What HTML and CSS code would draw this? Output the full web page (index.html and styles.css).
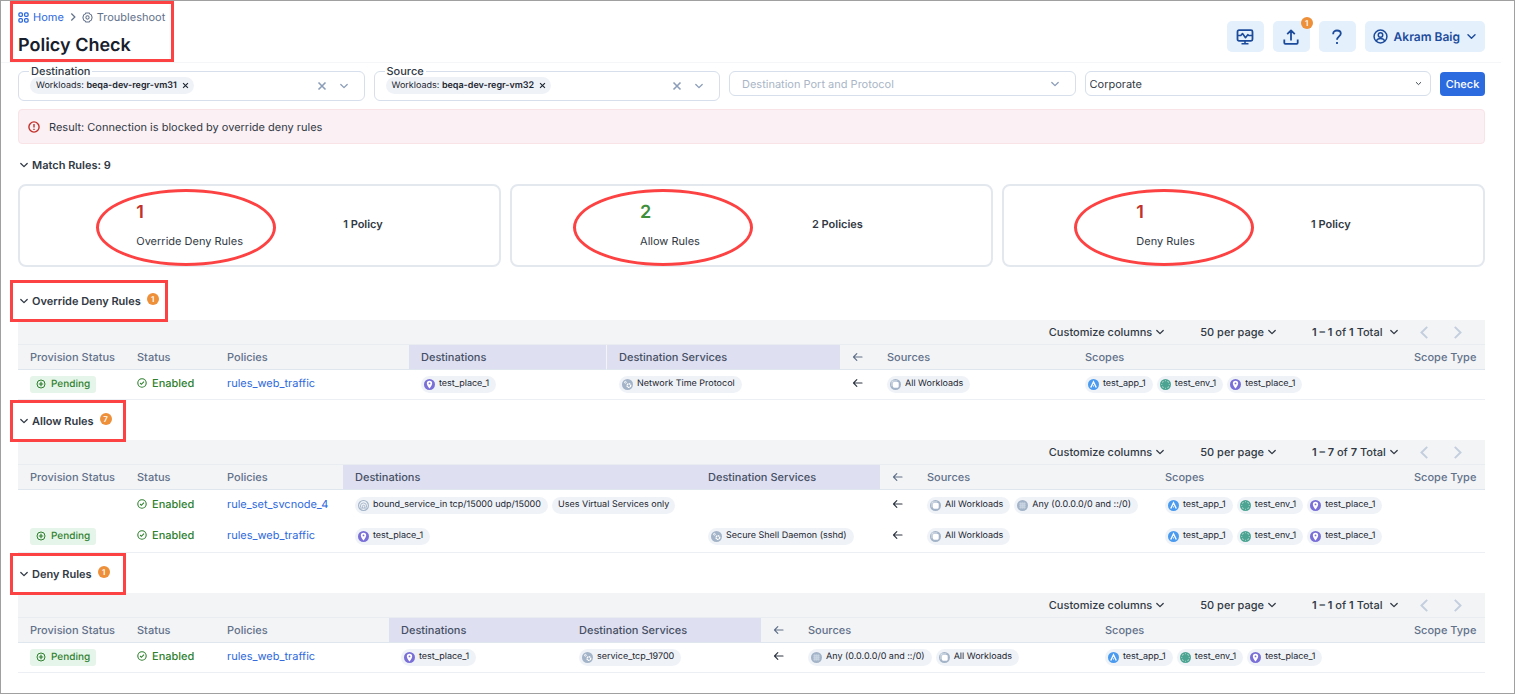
FILE: index.html
```html
<!DOCTYPE html>
<html lang="en">
  <head>
    <meta charset="utf-8" />
    <meta name="viewport" content="width=device-width, initial-scale=1" />
    <title>Policy Check</title>
    <link rel="stylesheet" href="styles.css" />
  </head>

  <body>
    <!-- icon set -->
    <svg class="sprite" aria-hidden="true">
      <symbol id="i-grid" viewBox="0 0 12 12" fill="none" stroke="currentColor" stroke-width="1.4">
        <rect x="1" y="1" width="3.8" height="3.8" rx="1.2" />
        <rect x="7.2" y="1" width="3.8" height="3.8" rx="1.2" />
        <rect x="1" y="7.2" width="3.8" height="3.8" rx="1.2" />
        <rect x="7.2" y="7.2" width="3.8" height="3.8" rx="1.2" />
      </symbol>
      <symbol id="i-gear" viewBox="0 0 12 12" fill="none" stroke="currentColor" stroke-width="1.1">
        <path d="M4.3 1h3.4l1 1.3 1.5.9.8 2.8-.8 2.8-1.5.9-1 1.3H4.3l-1-1.3-1.5-.9L1 6l.8-2.8 1.5-.9z" stroke-linejoin="round" />
        <circle cx="6" cy="6" r="1.8" />
      </symbol>
      <symbol id="i-down" viewBox="0 0 10 10" fill="none" stroke="currentColor" stroke-width="1.3" stroke-linecap="round" stroke-linejoin="round">
        <path d="M1.8 3.5 5 6.6l3.2-3.1" />
      </symbol>
      <symbol id="i-right" viewBox="0 0 12 12" fill="none" stroke="currentColor" stroke-width="1.8">
        <path d="M3.5.8 8.8 6l-5.300 5.200" />
      </symbol>
      <symbol id="i-left" viewBox="0 0 12 12" fill="none" stroke="currentColor" stroke-width="1.8">
        <path d="M8.5.8 3.2 6l5.300 5.200" />
      </symbol>
      <symbol id="i-x" viewBox="0 0 10 10" fill="none" stroke="currentColor" stroke-width="1.6">
        <path d="m1.5 1.5 7 7m0-7-7 7" />
      </symbol>
      <symbol id="i-arrow" viewBox="0 0 12 12" fill="none" stroke="currentColor" stroke-width="1.2" stroke-linecap="round" stroke-linejoin="round">
        <path d="M10 6H1.500m3.300-3.300L1.500 6l3.300 3.300" />
      </symbol>
      <symbol id="i-monitor" viewBox="0 0 18 16" fill="none" stroke="currentColor" stroke-width="1.8" stroke-linejoin="round">
        <rect x="1.5" y="1.2" width="15" height="10.6" rx="1.5" />
        <path d="M1.500 6.500h3.300l1.700-2 3 4.200 2.300-3 1 .8h3.700M9 12v2.500M5.500 14.800h7" stroke-width="1.6" />
      </symbol>
      <symbol id="i-upload" viewBox="0 0 16 16" fill="none" stroke="currentColor" stroke-width="1.8" stroke-linejoin="round">
        <path d="M1.300 10.500v3.300a1 1 0 0 0 1 1h11.400a1 1 0 0 0 1-1v-3.300M8 11.500V1.600M4.200 5.200 8 1.400l3.800 3.800" />
      </symbol>
      <symbol id="i-help" viewBox="0 0 12 16" fill="none" stroke="currentColor" stroke-width="1.8">
        <path d="M2.200 5.200V4.700C2.200 2.700 3.800 1.500 6 1.500s3.800 1.300 3.800 3.100c0 2.600-3.800 3-3.800 6.200M6 13v2" />
      </symbol>
      <symbol id="i-user" viewBox="0 0 14 14" fill="none" stroke="currentColor" stroke-width="1.4">
        <circle cx="7" cy="7" r="6" />
        <circle cx="7" cy="5.6" r="2.1" />
        <path d="M3 11.200c.8-1.700 2.300-2.300 4-2.300s3.200.6 4 2.300" />
      </symbol>
      <symbol id="i-alert" viewBox="0 0 12 12" fill="none" stroke="currentColor" stroke-width="1.4">
        <circle cx="6" cy="6" r="5.1" />
        <path d="M6 3v3.600M6 7.700v1.400" />
      </symbol>
      <symbol id="i-plus" viewBox="0 0 10 10" fill="none" stroke="currentColor" stroke-width="1">
        <circle cx="5" cy="5" r="4" />
        <path d="M5 2.800v4.400M2.800 5h4.400" stroke-width="1.2" />
      </symbol>
      <symbol id="i-check" viewBox="0 0 10 10" fill="none" stroke="currentColor" stroke-width="1.1">
        <circle cx="5" cy="5" r="4.2" />
        <path d="m3.100 5 1.300 1.300L7 3.600" />
      </symbol>
      <symbol id="i-place" viewBox="0 0 12 12">
        <circle cx="6" cy="6" r="6" fill="#7a6fd6" />
        <path d="M6 1.900a2.900 2.900 0 0 0-2.900 3C3.100 6.900 6 10.400 6 10.400s2.900-3.500 2.900-5.500a2.900 2.900 0 0 0-2.900-3z" fill="#fff" />
        <circle cx="6" cy="4.8" r="1" fill="#7a6fd6" />
      </symbol>
      <symbol id="i-app" viewBox="0 0 12 12">
        <circle cx="6" cy="6" r="6" fill="#4a9af0" />
        <path d="M3 9.200 6 3l3 6.200" fill="none" stroke="#fff" stroke-width="1.5" />
        <path d="M6 6.800v1.600" stroke="#d5e8fc" stroke-width="1" />
      </symbol>
      <symbol id="i-env" viewBox="0 0 12 12">
        <circle cx="6" cy="6" r="6" fill="#4ba391" />
        <path d="M2.800 4.300V2.800h1.500M7.700 2.800h1.500v1.500M9.200 7.700v1.500H7.700M4.300 9.200H2.800V7.700M6 1v1.500M6 9.500V11M1 6h1.500M9.500 6H11" fill="none" stroke="#b9ddd5" stroke-width=".7" />
      </symbol>
      <symbol id="i-service" viewBox="0 0 12 12">
        <circle cx="6" cy="6" r="6" fill="#a3b3c8" />
        <circle cx="7.5" cy="7.2" r="2" fill="none" stroke="#fff" stroke-width="1.5" stroke-dasharray="1.6 .5" />
        <circle cx="3.7" cy="3.6" r="1" fill="none" stroke="#fff" stroke-width=".9" />
      </symbol>
      <symbol id="i-workloads" viewBox="0 0 12 12">
        <circle cx="6" cy="6" r="6" fill="#a3b3c8" />
        <rect x="3.2" y="3.2" width="6.3" height="6.3" rx="1.2" fill="#fff" />
        <path d="M2.200 8V2.200H8" fill="none" stroke="#fff" stroke-width=".8" />
      </symbol>
      <symbol id="i-any" viewBox="0 0 12 12">
        <circle cx="6" cy="6" r="6" fill="#a3b3c8" />
        <rect x="2.8" y="2.8" width="6.4" height="6.4" fill="#bccadb" />
        <path d="M2.500 4h7M2.500 6h7M2.500 8h7M4 2.500v7M6 2.500v7M8 2.500v7" stroke="#cfd9e5" stroke-width=".5" />
      </symbol>
      <symbol id="i-bound" viewBox="0 0 12 12" fill="none" stroke="#a3b3c8">
        <circle cx="6" cy="6" r="5.4" stroke-width="1.2" />
        <path d="M2.700 8V6.500a3.300 3.300 0 0 1 6.600 0V8M4.800 8.800V7a1.300 1.300 0 0 1 2.600 0v1.800M2.500 8.800h7" stroke-width="1" />
      </symbol>
    </svg>

    <header class="topbar">
      <div class="heading marked">
        <nav class="breadcrumb" aria-label="Breadcrumb">
          <a href="#"><svg class="icon-sm"><use href="#i-grid" /></svg>Home</a>
          <svg class="sep"><use href="#i-right" /></svg>
          <span><svg class="icon-sm"><use href="#i-gear" /></svg>Troubleshoot</span>
        </nav>
        <h1>Policy Check</h1>
      </div>
      <div class="actions">
        <button class="action" aria-label="System health"><svg class="icon-lg"><use href="#i-monitor" /></svg></button>
        <button class="action" aria-label="Provision changes">
          <svg class="icon-lg"><use href="#i-upload" /></svg>
          <span class="badge badge-corner">1</span>
        </button>
        <button class="action" aria-label="Help"><svg class="icon-lg"><use href="#i-help" /></svg></button>
        <button class="action user">
          <svg class="icon-md"><use href="#i-user" /></svg>
          Akram Baig
          <svg class="icon-sm"><use href="#i-down" /></svg>
        </button>
      </div>
    </header>

    <main>
      <form class="filters" onsubmit="return false">
        <fieldset class="picker">
          <legend><label for="destination">Destination</label></legend>
          <span class="chip picked">Workloads:&nbsp;<b>beqa-dev-regr-vm31</b>
            <button type="button" aria-label="Remove beqa-dev-regr-vm31"><svg><use href="#i-x" /></svg></button></span>
          <input id="destination" type="text" />
          <button type="button" class="picker-btn" aria-label="Clear destination"><svg><use href="#i-x" /></svg></button>
          <button type="button" class="picker-btn" aria-label="Open destination"><svg><use href="#i-down" /></svg></button>
        </fieldset>
        <fieldset class="picker">
          <legend><label for="source">Source</label></legend>
          <span class="chip picked">Workloads:&nbsp;<b>beqa-dev-regr-vm32</b>
            <button type="button" aria-label="Remove beqa-dev-regr-vm32"><svg><use href="#i-x" /></svg></button></span>
          <input id="source" type="text" />
          <button type="button" class="picker-btn" aria-label="Clear source"><svg><use href="#i-x" /></svg></button>
          <button type="button" class="picker-btn" aria-label="Open source"><svg><use href="#i-down" /></svg></button>
        </fieldset>
        <div class="field port">
          <input type="text" placeholder="Destination Port and Protocol" aria-label="Destination Port and Protocol" />
          <button type="button" class="picker-btn" aria-label="Open ports"><svg><use href="#i-down" /></svg></button>
        </div>
        <div class="field network">
          <select aria-label="Network">
            <option>Corporate</option>
          </select>
          <svg><use href="#i-down" /></svg>
        </div>
        <button class="check">Check</button>
      </form>

      <div class="result" role="alert">
        <svg><use href="#i-alert" /></svg>
        Result: Connection is blocked by override deny rules
      </div>

      <section>
        <h2><svg><use href="#i-down" /></svg>Match Rules: 9</h2>
        <div class="cards">
          <div class="card ring-override">
            <div>
              <div class="count red">1</div>
              Override Deny Rules
            </div>
            <b>1 Policy</b>
          </div>
          <div class="card ring-allow">
            <div>
              <div class="count green">2</div>
              Allow Rules
            </div>
            <b>2 Policies</b>
          </div>
          <div class="card ring-deny">
            <div>
              <div class="count red">1</div>
              Deny Rules
            </div>
            <b>1 Policy</b>
          </div>
        </div>
      </section>

      <section>
        <h2 class="marked"><svg><use href="#i-down" /></svg>Override Deny Rules<span class="badge">1</span></h2>
        <div class="toolbar">
          <button>Customize columns<svg><use href="#i-down" /></svg></button>
          <button>50 per page<svg><use href="#i-down" /></svg></button>
          <button class="total"><span><b>1 – 1</b> of <b>1</b> Total</span><svg><use href="#i-down" /></svg></button>
          <div class="pager">
            <button aria-label="Previous page"><svg><use href="#i-left" /></svg></button>
            <button aria-label="Next page"><svg><use href="#i-right" /></svg></button>
          </div>
        </div>
        <table class="override">
          <thead>
            <tr>
              <th class="c-provision">Provision Status</th>
              <th class="c-status">Status</th>
              <th class="c-policies">Policies</th>
              <th class="c-dest dest">Destinations</th>
              <th class="c-services dest">Destination Services</th>
              <th class="c-arrow"><svg><use href="#i-arrow" /></svg></th>
              <th class="c-sources">Sources</th>
              <th>Scopes</th>
              <th class="c-type">Scope Type</th>
            </tr>
          </thead>
          <tbody>
            <tr>
              <td><span class="pending"><svg><use href="#i-plus" /></svg>Pending</span></td>
              <td class="text"><span class="enabled"><svg><use href="#i-check" /></svg>Enabled</span></td>
              <td class="text"><a href="#">rules_web_traffic</a></td>
              <td><div class="chips"><span class="chip"><svg><use href="#i-place" /></svg>test_place_1</span></div></td>
              <td><div class="chips"><span class="chip"><svg><use href="#i-service" /></svg>Network Time Protocol</span></div></td>
              <td class="text"><svg class="arrow"><use href="#i-arrow" /></svg></td>
              <td><div class="chips"><span class="chip"><svg><use href="#i-workloads" /></svg>All Workloads</span></div></td>
              <td>
                <div class="chips">
                  <span class="chip"><svg><use href="#i-app" /></svg>test_app_1</span>
                  <span class="chip"><svg><use href="#i-env" /></svg>test_env_1</span>
                  <span class="chip"><svg><use href="#i-place" /></svg>test_place_1</span>
                </div>
              </td>
              <td></td>
            </tr>
          </tbody>
        </table>
      </section>

      <section>
        <h2 class="marked"><svg><use href="#i-down" /></svg>Allow Rules<span class="badge">7</span></h2>
        <div class="toolbar">
          <button>Customize columns<svg><use href="#i-down" /></svg></button>
          <button>50 per page<svg><use href="#i-down" /></svg></button>
          <button class="total"><span><b>1 – 7</b> of <b>7</b> Total</span><svg><use href="#i-down" /></svg></button>
          <div class="pager">
            <button aria-label="Previous page"><svg><use href="#i-left" /></svg></button>
            <button aria-label="Next page"><svg><use href="#i-right" /></svg></button>
          </div>
        </div>
        <table class="allow">
          <thead>
            <tr>
              <th class="c-provision">Provision Status</th>
              <th class="c-status">Status</th>
              <th class="c-policies">Policies</th>
              <th class="c-dest dest">Destinations</th>
              <th class="c-services dest">Destination Services</th>
              <th class="c-arrow"><svg><use href="#i-arrow" /></svg></th>
              <th class="c-sources">Sources</th>
              <th>Scopes</th>
              <th class="c-type">Scope Type</th>
            </tr>
          </thead>
          <tbody>
            <tr>
              <td></td>
              <td class="text"><span class="enabled"><svg><use href="#i-check" /></svg>Enabled</span></td>
              <td class="text"><a href="#">rule_set_svcnode_4</a></td>
              <td>
                <div class="chips">
                  <span class="chip"><svg><use href="#i-bound" /></svg>bound_service_in tcp/15000 udp/15000</span>
                  <span class="chip plain">Uses Virtual Services only</span>
                </div>
              </td>
              <td></td>
              <td class="text"><svg class="arrow"><use href="#i-arrow" /></svg></td>
              <td>
                <div class="chips">
                  <span class="chip"><svg><use href="#i-workloads" /></svg>All Workloads</span>
                  <span class="chip"><svg><use href="#i-any" /></svg>Any (0.0.0.0/0 and ::/0)</span>
                </div>
              </td>
              <td>
                <div class="chips">
                  <span class="chip"><svg><use href="#i-app" /></svg>test_app_1</span>
                  <span class="chip"><svg><use href="#i-env" /></svg>test_env_1</span>
                  <span class="chip"><svg><use href="#i-place" /></svg>test_place_1</span>
                </div>
              </td>
              <td></td>
            </tr>
            <tr>
              <td><span class="pending"><svg><use href="#i-plus" /></svg>Pending</span></td>
              <td class="text"><span class="enabled"><svg><use href="#i-check" /></svg>Enabled</span></td>
              <td class="text"><a href="#">rules_web_traffic</a></td>
              <td><div class="chips"><span class="chip"><svg><use href="#i-place" /></svg>test_place_1</span></div></td>
              <td><div class="chips"><span class="chip"><svg><use href="#i-service" /></svg>Secure Shell Daemon (sshd)</span></div></td>
              <td class="text"><svg class="arrow"><use href="#i-arrow" /></svg></td>
              <td><div class="chips"><span class="chip"><svg><use href="#i-workloads" /></svg>All Workloads</span></div></td>
              <td>
                <div class="chips">
                  <span class="chip"><svg><use href="#i-app" /></svg>test_app_1</span>
                  <span class="chip"><svg><use href="#i-env" /></svg>test_env_1</span>
                  <span class="chip"><svg><use href="#i-place" /></svg>test_place_1</span>
                </div>
              </td>
              <td></td>
            </tr>
          </tbody>
        </table>
      </section>

      <section>
        <h2 class="marked"><svg><use href="#i-down" /></svg>Deny Rules<span class="badge">1</span></h2>
        <div class="toolbar">
          <button>Customize columns<svg><use href="#i-down" /></svg></button>
          <button>50 per page<svg><use href="#i-down" /></svg></button>
          <button class="total"><span><b>1 – 1</b> of <b>1</b> Total</span><svg><use href="#i-down" /></svg></button>
          <div class="pager">
            <button aria-label="Previous page"><svg><use href="#i-left" /></svg></button>
            <button aria-label="Next page"><svg><use href="#i-right" /></svg></button>
          </div>
        </div>
        <table class="deny">
          <thead>
            <tr>
              <th class="c-provision">Provision Status</th>
              <th class="c-status">Status</th>
              <th class="c-policies">Policies</th>
              <th class="c-dest dest">Destinations</th>
              <th class="c-services dest">Destination Services</th>
              <th class="c-arrow"><svg><use href="#i-arrow" /></svg></th>
              <th class="c-sources">Sources</th>
              <th>Scopes</th>
              <th class="c-type">Scope Type</th>
            </tr>
          </thead>
          <tbody>
            <tr>
              <td><span class="pending"><svg><use href="#i-plus" /></svg>Pending</span></td>
              <td class="text"><span class="enabled"><svg><use href="#i-check" /></svg>Enabled</span></td>
              <td class="text"><a href="#">rules_web_traffic</a></td>
              <td><div class="chips"><span class="chip"><svg><use href="#i-place" /></svg>test_place_1</span></div></td>
              <td><div class="chips"><span class="chip"><svg><use href="#i-service" /></svg>service_tcp_19700</span></div></td>
              <td class="text"><svg class="arrow"><use href="#i-arrow" /></svg></td>
              <td>
                <div class="chips">
                  <span class="chip"><svg><use href="#i-any" /></svg>Any (0.0.0.0/0 and ::/0)</span>
                  <span class="chip"><svg><use href="#i-workloads" /></svg>All Workloads</span>
                </div>
              </td>
              <td>
                <div class="chips">
                  <span class="chip"><svg><use href="#i-app" /></svg>test_app_1</span>
                  <span class="chip"><svg><use href="#i-env" /></svg>test_env_1</span>
                  <span class="chip"><svg><use href="#i-place" /></svg>test_place_1</span>
                </div>
              </td>
              <td></td>
            </tr>
          </tbody>
        </table>
      </section>
    </main>
  </body>
</html>
```

FILE: styles.css
```css
*,
*::after {
  box-sizing: border-box;
}

body {
  margin: 0;
  min-height: 100vh;
  border: 1px solid #a0a0a0;
  background: #fff;
  color: #313944;
  font-family: Inter, "Liberation Sans", sans-serif;
  font-size: 11px;
  line-height: 16px;
  text-rendering: geometricPrecision;
}

button,
input,
select {
  font: inherit;
  color: inherit;
  text-rendering: inherit;
}

button {
  display: inline-flex;
  align-items: center;
  padding: 0;
  border: 0;
  background: none;
  cursor: pointer;
}

a {
  color: #2d68dc;
  text-decoration: none;
}

b {
  font-weight: 600;
}

svg {
  flex: none;
  width: 10px;
  height: 10px;
}

.sprite {
  position: absolute;
  width: 0;
  height: 0;
}

.icon-sm {
  width: 11px;
  height: 11px;
}

.icon-md {
  width: 15px;
  height: 15px;
}

.icon-lg {
  width: 18px;
  height: 16px;
}

/* red highlight frame */
.marked {
  position: relative;
}

.marked::after {
  content: "";
  position: absolute;
  inset: 0 -9px -2px -8px;
  border: 3px solid #fc4242;
  pointer-events: none;
}

/* header */
.topbar {
  display: flex;
  justify-content: space-between;
  margin-right: 13px;
  padding: 0 16px 0 17px;
  height: 62px;
  border-bottom: 1px solid #f5f6f8;
}

.heading.marked::after {
  bottom: 0;
}

.breadcrumb {
  display: flex;
  align-items: center;
  gap: 5px;
  padding-top: 8px;
  color: #62718a;
}

.breadcrumb a,
.breadcrumb span {
  display: flex;
  align-items: center;
  gap: 4px;
}

.breadcrumb .sep {
  width: 8px;
  height: 8px;
}

h1 {
  margin: 9px 0 0;
  color: #17202c;
  font-size: 18px;
  font-weight: 600;
  line-height: 24px;
}

.actions {
  display: flex;
  gap: 9px;
  padding-top: 20px;
}

.action {
  position: relative;
  justify-content: center;
  width: 37px;
  height: 31px;
  border-radius: 5px;
  background: #e4f0fb;
  color: #1c4b9c;
}

.user {
  gap: 6px;
  width: auto;
  padding: 0 8px;
  font-size: 12px;
  font-weight: 600;
}

.badge {
  width: 12px;
  height: 12px;
  border-radius: 50%;
  background: #ee8f3a;
  color: #fff;
  font-size: 8px;
  font-weight: 600;
  line-height: 12px;
  text-align: center;
}

.badge-corner {
  position: absolute;
  top: -4px;
  right: -3px;
}

main {
  padding: 0 29px 20px 17px;
}

/* filters */
.filters {
  display: grid;
  grid-template-columns: repeat(4, 1fr) 45px;
  align-items: start;
  gap: 9px;
  height: 46px;
}

.picker,
.field {
  display: flex;
  align-items: center;
  min-width: 0;
  margin: 0;
  border: 1px solid #d6dfeb;
  border-radius: 6px;
}

.picker {
  height: 38px;
  padding: 0 15px 8px 11px;
}

.picker legend {
  padding: 0 2px;
  margin-left: -1px;
  font-weight: 500;
  line-height: 16px;
}

.picker input,
.field input {
  flex: 1;
  min-width: 0;
  padding: 0;
  border: 0;
  outline: 0;
  background: none;
}

.picker-btn {
  margin-left: 12px;
  color: #8b9db8;
}

.field {
  height: 25px;
  margin-top: 8px;
}

.port {
  padding: 0 15px 0 12px;
}

.port input::placeholder {
  color: #a9b5c6;
  opacity: 1;
}

.network {
  position: relative;
}

.network select {
  width: 100%;
  height: 100%;
  padding: 0 4px;
  border: 0;
  border-radius: 6px;
  appearance: none;
  background: none;
}

.network svg {
  position: absolute;
  right: 8px;
  width: 7px;
  height: 7px;
  pointer-events: none;
}

.check {
  justify-content: center;
  height: 24px;
  margin-top: 9px;
  border-radius: 4px;
  background: #2c6bdf;
  color: #fff;
  font-weight: 500;
}

.result {
  display: flex;
  align-items: center;
  gap: 9px;
  height: 35px;
  padding: 0 9px;
  border: 1px solid #f9e3e7;
  border-radius: 4px;
  background: #fbf0f4;
}

.result svg {
  width: 12px;
  height: 12px;
  color: #c2312c;
}

/* sections */
h2 {
  display: flex;
  align-items: center;
  width: fit-content;
  min-width: 99px;
  height: 40px;
  margin: 0;
  padding-top: 2px;
  font-size: 11px;
  font-weight: 600;
}

h2 svg {
  margin: 0 3px 0 1px;
}

h2 .badge {
  margin: 0 0 4px 6px;
}

.cards {
  display: grid;
  grid-template-columns: repeat(3, 1fr);
  gap: 9px;
  margin-bottom: 13px;
}

.card {
  position: relative;
  display: flex;
  align-items: center;
  justify-content: space-evenly;
  height: 83px;
  padding: 0 16px;
  border: 2px solid #e3e8ef;
  border-radius: 8px;
}

.card b {
  margin-bottom: 3px;
}

/* red rings round the counts */
.card::after {
  content: "";
  position: absolute;
  top: 3px;
  width: 180px;
  height: 77px;
  border: 3px solid #fc4242;
  border-radius: 50%;
  pointer-events: none;
}

.ring-override::after {
  left: 76px;
}

.ring-allow::after {
  left: 61px;
}

.ring-deny::after {
  left: 70px;
}

.count {
  margin-bottom: 10px;
  font-size: 18px;
  font-weight: 600;
  line-height: 20px;
}

.red {
  color: #c2312c;
}

.green {
  color: #3e8e3a;
}

/* tables */
.toolbar {
  display: flex;
  justify-content: flex-end;
  gap: 35px;
  height: 25px;
  padding-right: 21px;
  border-bottom: 1px solid #e9edf2;
  background: #f3f4f6;
  font-weight: 500;
}

.toolbar button {
  gap: 3px;
}

.toolbar .total {
  justify-content: space-between;
  min-width: 87px;
}

.pager {
  display: flex;
  gap: 20px;
  margin-left: -16px;
  color: #c3cfde;
}

.pager svg {
  width: 13px;
  height: 13px;
}

table {
  width: 100%;
  table-layout: fixed;
  border-collapse: separate;
  border-spacing: 0;
  border-bottom: 1px solid #eceff3;
}

th {
  height: 25px;
  padding: 0 0 0 12px;
  border-bottom: 1px solid #dfe6ee;
  background: #f3f4f6;
  color: #62718a;
  font-weight: 500;
  text-align: left;
  white-space: nowrap;
}

th svg,
.arrow {
  display: block;
  width: 12px;
  height: 12px;
}

.dest {
  background: #dfdff2;
  color: #454f63;
}

td {
  height: 29px;
  padding: 0 0 1px 12px;
}

td.text {
  padding-bottom: 3px;
}

.allow td {
  height: 31px;
}

.c-provision {
  width: 107px;
}

.c-status {
  width: 90px;
}

.c-arrow {
  width: 35px;
}

.c-type {
  width: 83px;
}

.override .c-policies {
  width: 194px;
}

.override .c-dest {
  width: 198px;
  border-right: 1px solid #f3f4f6;
}

.override .c-services {
  width: 233px;
}

.override .c-sources {
  width: 198px;
}

.allow .c-policies {
  width: 128px;
}

.allow .c-dest {
  width: 353px;
}

.allow .c-services {
  width: 184px;
}

.allow .c-sources {
  width: 238px;
}

.deny .c-policies {
  width: 174px;
}

.deny .c-dest {
  width: 178px;
}

.deny .c-services {
  width: 194px;
}

.deny .c-sources {
  width: 297px;
}

.pending,
.enabled {
  display: flex;
  align-items: center;
  width: fit-content;
  gap: 5px;
  color: #2f7f2f;
  font-weight: 500;
}

.pending {
  height: 17px;
  padding: 0 6px;
  border-radius: 3px;
  background: #e6f5e9;
  font-size: 10px;
}

.chips {
  display: flex;
  gap: 4px;
}

.chip {
  display: inline-flex;
  align-items: center;
  gap: 4px;
  height: 17px;
  padding: 0 7px 0 3px;
  border-radius: 9px;
  background: #eff3f7;
  color: #1d2530;
  font-size: 9px;
  white-space: nowrap;
}

.chip svg {
  width: 11px;
  height: 11px;
}

.plain {
  padding: 0 6px;
}

.picked {
  gap: 0;
  padding: 0 5px 0 6px;
}

.picked button {
  margin-left: 5px;
}

.picked svg {
  width: 7px;
  height: 7px;
}
```
